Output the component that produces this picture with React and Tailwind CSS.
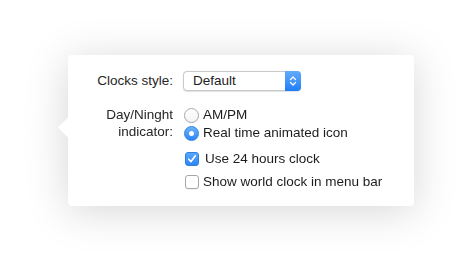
import React from "react";

function Radio({ checked }) {
  if (checked) {
    return (
      <span className="flex h-[15px] w-[15px] shrink-0 items-center justify-center rounded-full border border-[#2f7fe0] bg-gradient-to-b from-[#6cb3fb] to-[#2a86f5]">
        <span className="h-[5px] w-[5px] rounded-full bg-white" />
      </span>
    );
  }
  return (
    <span className="h-[15px] w-[15px] shrink-0 rounded-full border border-[#a8a8a8] bg-gradient-to-b from-white to-[#f4f4f4] shadow-[0_0.5px_0.5px_rgba(0,0,0,0.08)]" />
  );
}

function Checkbox({ checked }) {
  if (checked) {
    return (
      <span className="flex h-[14px] w-[14px] shrink-0 items-center justify-center rounded-[3px] border border-[#2f7fe0] bg-gradient-to-b from-[#5aa8fb] to-[#2a86f5]">
        <svg width="10" height="10" viewBox="0 0 10 10" fill="none">
          <path d="M1.8 5.2 L4 7.6 L8.4 1.8" stroke="white" strokeWidth="1.6" strokeLinecap="round" strokeLinejoin="round" />
        </svg>
      </span>
    );
  }
  return (
    <span className="h-[14px] w-[14px] shrink-0 rounded-[3px] border border-[#a8a8a8] bg-white shadow-[0_0.5px_0.5px_rgba(0,0,0,0.08)]" />
  );
}

export default function App() {
  return (
    <div
      className="min-h-[258px] w-[471px] bg-white pl-[68px] pt-[55px] text-[13.5px] text-[#1c1c1c]"
      style={{ fontFamily: '"Liberation Sans", Arial, sans-serif' }}
    >
      <div className="relative w-[346px] drop-shadow-[0_5px_20px_rgba(0,0,0,0.16)]">
        <span className="absolute left-[-7px] top-[65px] h-[15px] w-[15px] rotate-45 bg-white" />
        <div className="relative rounded-[4px] bg-white pb-[15px] pt-[16px]">
          <div className="flex h-[20px] items-center">
            <div className="w-[105px] text-right text-[#262626]">Clocks style:</div>
            <div className="ml-[10px] flex h-[20px] w-[118px] items-stretch rounded-[4px] border border-[#c9c9c9] bg-white shadow-[0_0.5px_1px_rgba(0,0,0,0.12)]">
              <div className="flex flex-1 items-center pl-[9px] leading-none">Default</div>
              <div className="-my-px -mr-px flex w-[16px] items-center justify-center rounded-r-[4px] bg-gradient-to-b from-[#62abfc] to-[#1b7ef6]">
                <svg width="8" height="12" viewBox="0 0 8 12" fill="none">
                  <path d="M1.5 4.5 L4 2 L6.5 4.5" stroke="white" strokeWidth="1.3" strokeLinecap="round" strokeLinejoin="round" />
                  <path d="M1.5 7.5 L4 10 L6.5 7.5" stroke="white" strokeWidth="1.3" strokeLinecap="round" strokeLinejoin="round" />
                </svg>
              </div>
            </div>
          </div>

          <div className="mt-[15px] flex">
            <div className="w-[105px] text-right leading-[17px] text-[#262626]">
              Day/Ninght
              <br />
              indicator:
            </div>
            <div className="ml-[11px] flex flex-col">
              <div className="flex h-[18px] items-center gap-[4px]">
                <Radio />
                <span>AM/PM</span>
              </div>
              <div className="flex h-[18px] items-center gap-[4px]">
                <Radio checked />
                <span>Real time animated icon</span>
              </div>
            </div>
          </div>

          <div className="ml-[117px] mt-[8px] flex flex-col gap-[5px]">
            <div className="flex h-[18px] items-center gap-[6px]">
              <Checkbox checked />
              <span>Use 24 hours clock</span>
            </div>
            <div className="flex h-[18px] items-center gap-[4px]">
              <Checkbox />
              <span>Show world clock in menu bar</span>
            </div>
          </div>
        </div>
      </div>
    </div>
  );
}
